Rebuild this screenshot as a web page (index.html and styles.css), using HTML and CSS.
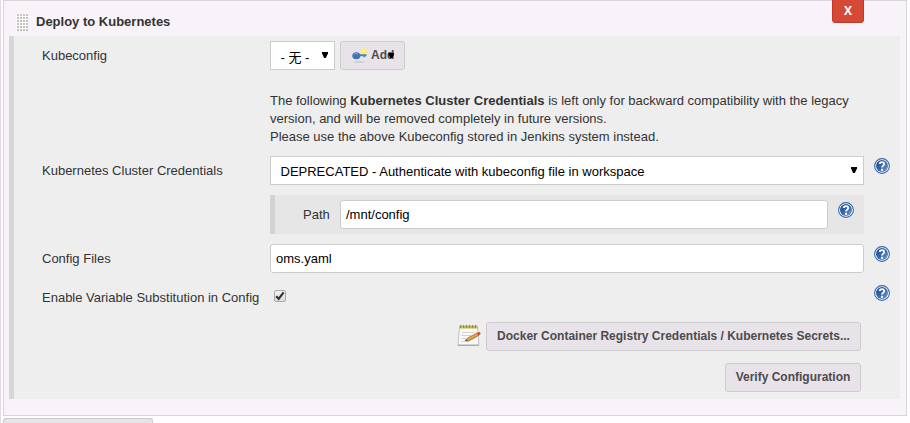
FILE: index.html
```html
<!DOCTYPE html>
<html lang="en">
<head>
<meta charset="utf-8">
<title>Deploy to Kubernetes</title>
<link rel="stylesheet" href="styles.css">
</head>
<body>
<svg class="defs" aria-hidden="true">
  <defs>
    <linearGradient id="blue" x1="0" y1="0" x2="1" y2="1">
      <stop offset="0" stop-color="#1d478b"/><stop offset=".5" stop-color="#3867aa"/><stop offset="1" stop-color="#7ba6d5"/>
    </linearGradient>
    <symbol id="help" viewBox="0 0 16 16">
      <circle cx="8" cy="8" r="7.4" fill="#fff" stroke="#3768aa" stroke-width="1.1"/>
      <circle cx="8" cy="8" r="6" fill="url(#blue)"/>
      <path d="M5.8 6C5.8 3.5 10.2 3.5 10.2 5.9C10.2 7.6 8 7.6 8 9.6" fill="none" stroke="#fff" stroke-width="1.8"/>
      <rect x="7" y="10.8" width="2" height="2" fill="#fff"/>
    </symbol>
  </defs>
</svg>
<main class="page">
  <section class="panel">
    <button class="remove">X</button>
    <header class="heading"><svg class="grip" width="12" height="18"><defs><pattern id="dots" width="3" height="3" patternUnits="userSpaceOnUse"><path d="M1 1H3V3H1Z" fill="#c2c1bc"/></pattern></defs><rect width="12" height="18" fill="#fff"/><rect width="12" height="18" fill="url(#dots)"/></svg><b>Deploy to Kubernetes</b></header>
    <div class="form">
      <div class="row">
        <label class="label">Kubeconfig</label>
        <div class="field inline">
          <div class="select short"><span class="none">- 无 -</span><i class="arrow"></i></div>
          <button class="btn add">
            <svg width="16" height="16" viewBox="0 0 16 16">
              <ellipse cx="7.5" cy="14" rx="6" ry=".8" fill="#cbc8cc"/>
              <circle cx="12" cy="3" r="2.6" fill="#fff23c"/><circle cx="12" cy="3" r="1" fill="#fffbc0"/>
              <path d="M6 6.2H14.5V8.3H13V9.3H11.5V8.3H6Z" fill="#4d82bb"/>
              <ellipse cx="4.3" cy="7.8" rx="4" ry="3.5" fill="#3c74b6"/>
              <path d="M2 6.2Q4 4.8 6.2 6.2" fill="none" stroke="#7ba9d8"/>
            </svg><span>Add</span><i class="arrow"></i>
          </button>
        </div>
      </div>
      <div class="row note">
        <p class="field">The following <b>Kubernetes Cluster Credentials</b> is left only for backward compatibility with the legacy<br>version, and will be removed completely in future versions.<br>Please use the above Kubeconfig stored in Jenkins system instead.</p>
      </div>
      <div class="row">
        <label class="label">Kubernetes Cluster Credentials</label>
        <div class="field select"><span>DEPRECATED - Authenticate with kubeconfig file in workspace</span><i class="arrow"></i></div>
        <svg class="help"><use href="#help"/></svg>
      </div>
      <div class="row nested-row">
        <div class="field nested">
          <label class="path-label">Path</label>
          <div class="input">/mnt/config</div>
          <svg class="help"><use href="#help"/></svg>
        </div>
      </div>
      <div class="row">
        <label class="label">Config Files</label>
        <div class="field input">oms.yaml</div>
        <svg class="help"><use href="#help"/></svg>
      </div>
      <div class="row check-row">
        <label class="label">Enable Variable Substitution in Config</label>
        <div class="field"><span class="check"><svg width="10" height="10" viewBox="0 0 10 10"><path d="M1.2 5.2L3.7 7.8L8.6 1.4" fill="none" stroke="#333" stroke-width="2.2"/></svg></span></div>
        <svg class="help"><use href="#help"/></svg>
      </div>
      <div class="actions first">
        <svg class="notepad" width="24" height="24" viewBox="0 0 24 24">
          <path d="M2.5 3H20.5L22 21.5H1Z" fill="#f8f8f6" stroke="#c2c3c0"/>
          <path d="M1 20.5H22V22H1Z" fill="#aaaaa7"/>
          <rect x="2.5" y="1.5" width="18" height="3" fill="#c0b657"/>
          <path d="M3.5 1V4M6.5 1V4M9.5 1V4M12.5 1V4M15.5 1V4M18.5 1V4" stroke="#969044"/>
          <path d="M5 8.5H18M4.5 11.5H14M4.5 14.5H10M4 17.5H8" stroke="#d3d3d0"/>
          <path d="M10 17.5L19.5 12.5" stroke="#bbb" stroke-width="1.5"/>
          <path d="M8 17L11 13.7L20.5 8.8L22 11.2L12 16.5Z" fill="#e2a245" stroke="#9b6527" stroke-width=".7"/>
          <path d="M8 17L9.6 15.2L10.5 16.8Z" fill="#443"/>
          <path d="M20 9L22.6 8L23.7 9.8L21.4 11.5Z" fill="#d93c2c"/>
        </svg>
        <button class="btn docker">Docker Container Registry Credentials / Kubernetes Secrets...</button>
      </div>
      <div class="actions"><button class="btn verify">Verify Configuration</button></div>
    </div>
  </section>
  <div class="next-button"></div>
</main>
</body>
</html>
```
FILE: styles.css
```css
* { box-sizing: border-box; }
body { margin: 0; background: #fffdff; font: 13px/18px "Liberation Sans", "Noto Sans CJK SC", sans-serif; color: #333; }
.defs { position: absolute; width: 0; height: 0; }
.page { height: 423px; padding-left: 2px; border-left: 1px solid #e2dce2; overflow: hidden; }
.panel { position: relative; width: 904px; height: 416px; padding: 0 6px 0 5px; background: #f8f3f8; border: 1px solid #d9d4d9; }
.heading { display: flex; height: 35px; padding: 12px 0 0 7px; }
.grip { flex: none; margin-right: 8px; }
.remove { position: absolute; top: -4px; right: 42px; width: 32px; height: 26px; padding: 0; font: bold 12px "Open Sans", sans-serif; color: #fff; background: #d64937; border: 1px solid #c23827; border-radius: 3px; }
.form { height: 363px; padding-top: 5px; background: #eee; border-left: 5px solid #d6d6d6; }
.row { display: flex; margin-bottom: 10px; }
.label { width: 228px; flex: none; padding-top: 6px; white-space: nowrap; }
.row > .label { margin-left: 28px; }
.field { width: 594px; margin: 0; }
.inline { display: flex; gap: 5px; }
.note, .nested-row { padding-left: 256px; }
.note { padding-top: 12px; }
.select, .input { height: 29px; background: #fff; border: 1px solid #ccc; color: #000; line-height: 18px; }
.select { display: flex; justify-content: space-between; padding: 6px 6px 0 9.5px; }
.input { padding: 5px; border-radius: 3px; }
.short { width: 65px; }
.none { margin-top: 1px; }
.arrow { width: 6px; height: 6px; margin-top: 4px; background: #000; clip-path: polygon(0 0, 100% 0, 100% 20%, 65% 100%, 35% 100%, 0 20%); }
.btn { height: 29px; padding: 0 0 2px; font: bold 12px "Liberation Sans", sans-serif; color: #4d4b4e; background: #e8e3e8; border: 1px solid #ccc; border-radius: 3px; }
.add { display: flex; width: 65px; padding: 6px 0 0 11px; }
.add span { margin-left: 3px; }
.add .arrow { height: 5px; margin: 5px 0 0 -6px; }
.help { width: 16px; height: 16px; flex: none; margin: 2px 0 0 10px; }
.nested { display: flex; height: 39px; padding: 5px 0; background: #e6e6e6; border-left: 5px solid #d4d2d4; }
.path-label { width: 65px; padding: 6px 0 0 28px; }
.nested .input { width: 488px; }
.check-row { height: 29px; }
.check { display: flex; width: 12px; height: 12px; margin: 7px 0 0 4px; border: 1px solid #aaa; border-radius: 2px; background: linear-gradient(#f2f2f2, #ddd); }
.actions { display: flex; justify-content: flex-end; padding-right: 39px; }
.first { margin-bottom: 12px; gap: 5px; }
.notepad { margin-top: 2px; }
.docker { width: 375px; }
.verify { width: 136px; }
.next-button { width: 150px; height: 8px; margin-top: 2px; background: #e8e3e8; border: 1px solid #ccc; border-bottom: 0; border-radius: 3px 3px 0 0; }
```
